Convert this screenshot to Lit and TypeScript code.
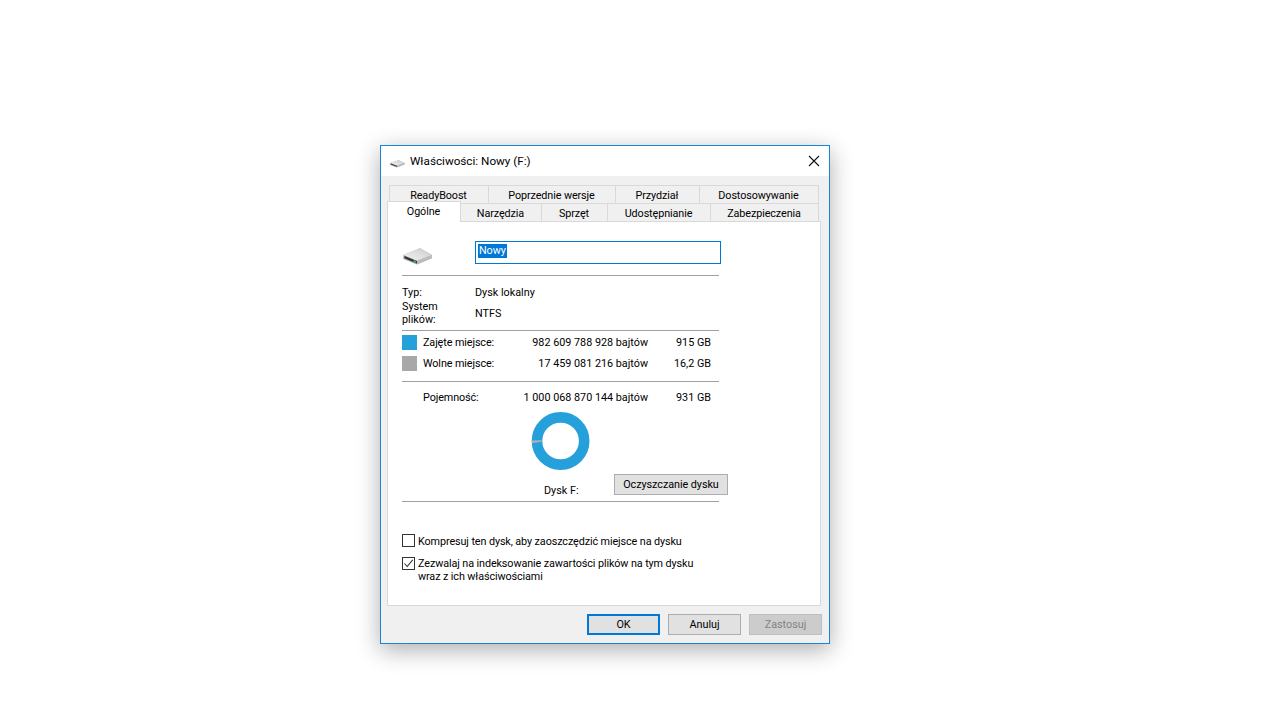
import { LitElement, html, css, svg } from "lit";
import { customElement } from "lit/decorators.js";

const driveIcon = (cls: string) => svg`
<svg class=${cls} viewBox="0 0 30 18" preserveAspectRatio="none" aria-hidden="true">
  <defs>
    <linearGradient id="top-${cls}" x1="0" y1="1" x2="1" y2="0">
      <stop offset="0" stop-color="#f2f2f2"/><stop offset=".55" stop-color="#dedede"/><stop offset="1" stop-color="#c6c6c6"/>
    </linearGradient>
  </defs>
  <path d="M0.3 7 L17 0.3 L29 7 L29 10.2 L14 16.6 L0.3 11 Z" fill="#a9a9a9"/>
  <path d="M0.3 7 L17 0.3 L29 7 L14 12.8 Z" fill="url(#top-${cls})"/>
  <path d="M1.5 8 L14 13 L14 15.4 L1.5 10.2 Z" fill="#333"/>
  <path d="M14 13 L29 7 L29 9.8 L14 16 Z" fill="#bdbdbd"/>
  <path d="M10.6 12.1 L12.8 13 L12.8 14.9 L10.6 14 Z" fill="#3fbf5f"/>
</svg>`;

@customElement("app-root")
export class AppRoot extends LitElement {
  static styles = css`
    :host {
      display: block;
      width: 1280px;
      height: 720px;
      background: #fff;
      overflow: hidden;
      font: 10.8px/14px Roboto, "Liberation Sans", sans-serif;
      color: #000;
    }
    .page { padding: 145px 0 0 380px; }
    .win {
      box-sizing: border-box;
      width: 450px;
      height: 499px;
      border: 1px solid #1883d7;
      background: #f0f0f0;
      box-shadow: 0 6px 22px rgba(0, 0, 0, 0.32);
      display: flex;
      flex-direction: column;
    }
    .title {
      height: 30px;
      background: #fff;
      display: flex;
      align-items: center;
      padding-left: 9px;
      flex: none;
    }
    .title-icon { width: 15px; height: 8px; margin: 5px 5px 0 0; }
    .title-text { font-size: 11.7px; flex: 1; }
    .close { width: 12px; height: 12px; margin-right: 9px; }
    .tabs { padding: 9px 0 0 6px; flex: none; }
    .tab-row { display: grid; height: 18px; }
    .back { grid-template-columns: 100px 127px 84px 119px; margin-left: 2px; }
    .front { grid-template-columns: 74px 81px 66px 103px 108px; }
    .tab {
      box-sizing: border-box;
      border: 1px solid #d9d9d9;
      border-left: 0;
      border-bottom: 0;
      text-align: center;
      line-height: 18px;
      padding: 1px 1px 0 0;
      letter-spacing: -0.1px;
      background: #f0f0f0;
      white-space: nowrap;
    }
    .back .tab:first-child { border-left: 1px solid #d9d9d9; }
    .tab.sel {
      position: relative;
      z-index: 1;
      margin-top: -2px;
      height: 21px;
      background: #fff;
      border: 1px solid #d9d9d9;
      border-bottom: 0;
      line-height: 17px;
    }
    .panel {
      box-sizing: border-box;
      width: 434px;
      height: 385px;
      margin-left: 6px;
      background: #fff;
      border: 1px solid #d9d9d9;
      padding: 19px 0 0 14px;
      flex: none;
    }
    .name-row { display: flex; height: 23px; }
    .big-icon { width: 30px; height: 18px; margin: 7px 0 0 1px; }
    .input {
      box-sizing: border-box;
      width: 246px;
      height: 23px;
      margin-left: 42px;
      border: 1px solid #0078d7;
      padding: 2px;
      display: flex;
      align-items: flex-start;
    }
    .selected {
      background: #0078d7;
      color: #fff;
      line-height: 14px;
      height: 14px;
      padding: 0 1px;
      letter-spacing: -0.1px;
    }
    .sep { width: 317px; height: 1px; background: #a0a0a0; }
    .s1 { margin-top: 11px; }
    .info {
      display: grid;
      grid-template-columns: 73px 1fr;
      align-items: center;
      margin: 10px 0 4px;
    }
    .two { line-height: 13px; }
    .ntfs { padding-top: 1px; }
    .stats {
      display: grid;
      width: 309px;
      grid-template-columns: 21px 90px 1fr 63px;
      align-items: center;
      white-space: nowrap;
    }
    .stats .r { text-align: right; }
    .name { letter-spacing: -0.1px; }
    .swatch { width: 15px; height: 15px; }
    .used-c { background: #26a0da; }
    .free-c { background: #a8a8a8; }
    .rows { grid-auto-rows: 15px; row-gap: 6px; margin: 4px 0 10px; }
    .cap { margin: 9px 0 0; }
    .chart {
      display: grid;
      width: 326px;
      grid-template-columns: 212px 1fr;
      height: 97px;
      margin-top: 6px;
    }
    .chart-left { display: flex; flex-direction: column; align-items: flex-start; }
    .donut { width: 60px; height: 60px; margin-left: 129px; }
    .drive-label { margin: 13px 0 0 142px; }
    .clean {
      box-sizing: border-box;
      width: 114px;
      height: 21px;
      margin-top: 63px;
      background: #e1e1e1;
      border: 1px solid #adadad;
      text-align: center;
      line-height: 19px;
      letter-spacing: -0.05px;
    }
    .s3 { margin-top: -7px; }
    .check { display: flex; }
    .box {
      box-sizing: border-box;
      width: 13px;
      height: 13px;
      border: 1px solid #333;
      flex: none;
      margin-right: 3px;
      background: #fff;
    }
    .box svg { display: block; width: 11px; height: 11px; }
    .label { line-height: 13px; letter-spacing: -0.1px; }
    .c1 { margin-top: 32px; }
    .c1 .label { margin-top: 1px; }
    .c2 { margin-top: 9px; }
    .footer {
      display: flex;
      justify-content: flex-end;
      gap: 8px;
      padding: 8px 7px 0 0;
    }
    .btn {
      box-sizing: border-box;
      width: 73px;
      height: 21px;
      background: #e1e1e1;
      border: 1px solid #adadad;
      text-align: center;
      line-height: 19px;
    }
    .btn.ok { border: 2px solid #0078d7; line-height: 17px; }
    .btn.off { background: #cccccc; border-color: #bfbfbf; color: #838383; }
  `;

  render() {
    return html`
      <div class="page">
        <div class="win">
          <div class="title">
            ${driveIcon("title-icon")}
            <span class="title-text">Właściwości: Nowy (F:)</span>
            <svg class="close" viewBox="0 0 12 12" aria-hidden="true">
              <path d="M1 1 L11 11 M11 1 L1 11" stroke="#111" stroke-width="1.1" fill="none"/>
            </svg>
          </div>
          <div class="tabs">
            <div class="tab-row back">
              <div class="tab">ReadyBoost</div>
              <div class="tab">Poprzednie wersje</div>
              <div class="tab">Przydział</div>
              <div class="tab">Dostosowywanie</div>
            </div>
            <div class="tab-row front">
              <div class="tab sel">Ogólne</div>
              <div class="tab">Narzędzia</div>
              <div class="tab">Sprzęt</div>
              <div class="tab">Udostępnianie</div>
              <div class="tab">Zabezpieczenia</div>
            </div>
          </div>
          <div class="panel">
            <div class="name-row">
              ${driveIcon("big-icon")}
              <div class="input"><span class="selected">Nowy</span></div>
            </div>
            <div class="sep s1"></div>
            <div class="info">
              <div>Typ:</div><div>Dysk lokalny</div>
              <div class="two">System<br />plików:</div><div class="ntfs">NTFS</div>
            </div>
            <div class="sep"></div>
            <div class="stats rows">
              <div class="swatch used-c"></div><div class="name">Zajęte miejsce:</div>
              <div class="r">982 609 788 928 bajtów</div><div class="r">915 GB</div>
              <div class="swatch free-c"></div><div class="name">Wolne miejsce:</div>
              <div class="r">17 459 081 216 bajtów</div><div class="r">16,2 GB</div>
            </div>
            <div class="sep"></div>
            <div class="stats cap">
              <div></div><div class="name">Pojemność:</div>
              <div class="r">1 000 068 870 144 bajtów</div><div class="r">931 GB</div>
            </div>
            <div class="chart">
              <div class="chart-left">
                <svg class="donut" viewBox="0 0 60 60" aria-hidden="true">
                  <circle cx="29.6" cy="30" r="23.6" fill="none" stroke="#26a0da" stroke-width="10.6"/>
                  <path d="M0.8 29.6 L11.4 29.2 L11.4 30.6 L0.8 32.2 Z" fill="#b0b0b0"/>
                </svg>
                <div class="drive-label">Dysk F:</div>
              </div>
              <div class="clean">Oczyszczanie dysku</div>
            </div>
            <div class="sep s3"></div>
            <div class="check c1">
              <div class="box"></div>
              <div class="label">Kompresuj ten dysk, aby zaoszczędzić miejsce na dysku</div>
            </div>
            <div class="check c2">
              <div class="box">
                <svg viewBox="0 0 11 11" aria-hidden="true">
                  <path d="M1.5 5.5 L4.2 8.5 L9.7 1.8" fill="none" stroke="#333" stroke-width="1.1"/>
                </svg>
              </div>
              <div class="label">Zezwalaj na indeksowanie zawartości plików na tym dysku<br />wraz z ich właściwościami</div>
            </div>
          </div>
          <div class="footer">
            <div class="btn ok">OK</div>
            <div class="btn">Anuluj</div>
            <div class="btn off">Zastosuj</div>
          </div>
        </div>
      </div>
    `;
  }
}
